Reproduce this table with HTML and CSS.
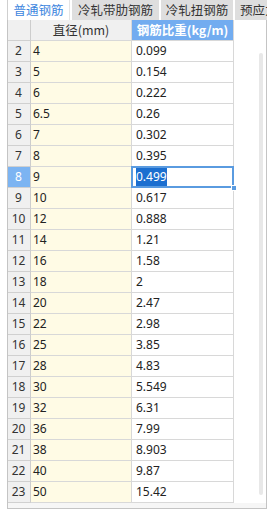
FILE: index.html
```html
<!DOCTYPE html>
<html lang="zh">
<head>
<meta charset="utf-8">
<link rel="stylesheet" href="styles.css">
</head>
<body>
<div class="wrap">
  <div class="tabs">
    <div class="tab active">普通钢筋</div>
    <div class="tab t2">冷轧带肋钢筋</div>
    <div class="tab t3">冷轧扭钢筋</div>
    <div class="tab t4">预应力钢筋</div>
  </div>
  <div class="grid">
    <div class="row head">
      <div class="rh"></div>
      <div class="c1">直径(mm)</div>
      <div class="c2 sel-col">钢筋比重(kg/m)</div>
      <div class="fill"></div>
    </div>
    <div class="row"><div class="rh">2</div><div class="c1">4</div><div class="c2">0.099</div><div class="fill"></div></div>
    <div class="row"><div class="rh">3</div><div class="c1">5</div><div class="c2">0.154</div><div class="fill"></div></div>
    <div class="row"><div class="rh">4</div><div class="c1">6</div><div class="c2">0.222</div><div class="fill"></div></div>
    <div class="row"><div class="rh">5</div><div class="c1">6.5</div><div class="c2">0.26</div><div class="fill"></div></div>
    <div class="row"><div class="rh">6</div><div class="c1">7</div><div class="c2">0.302</div><div class="fill"></div></div>
    <div class="row"><div class="rh">7</div><div class="c1">8</div><div class="c2">0.395</div><div class="fill"></div></div>
    <div class="row"><div class="rh sel-row">8</div><div class="c1">9</div><div class="c2 active-cell"><span class="hl">0.499</span><span class="handle"></span></div><div class="fill"></div></div>
    <div class="row"><div class="rh">9</div><div class="c1">10</div><div class="c2">0.617</div><div class="fill"></div></div>
    <div class="row"><div class="rh">10</div><div class="c1">12</div><div class="c2">0.888</div><div class="fill"></div></div>
    <div class="row"><div class="rh">11</div><div class="c1">14</div><div class="c2">1.21</div><div class="fill"></div></div>
    <div class="row"><div class="rh">12</div><div class="c1">16</div><div class="c2">1.58</div><div class="fill"></div></div>
    <div class="row"><div class="rh">13</div><div class="c1">18</div><div class="c2">2</div><div class="fill"></div></div>
    <div class="row"><div class="rh">14</div><div class="c1">20</div><div class="c2">2.47</div><div class="fill"></div></div>
    <div class="row"><div class="rh">15</div><div class="c1">22</div><div class="c2">2.98</div><div class="fill"></div></div>
    <div class="row"><div class="rh">16</div><div class="c1">25</div><div class="c2">3.85</div><div class="fill"></div></div>
    <div class="row"><div class="rh">17</div><div class="c1">28</div><div class="c2">4.83</div><div class="fill"></div></div>
    <div class="row"><div class="rh">18</div><div class="c1">30</div><div class="c2">5.549</div><div class="fill"></div></div>
    <div class="row"><div class="rh">19</div><div class="c1">32</div><div class="c2">6.31</div><div class="fill"></div></div>
    <div class="row"><div class="rh">20</div><div class="c1">36</div><div class="c2">7.99</div><div class="fill"></div></div>
    <div class="row"><div class="rh">21</div><div class="c1">38</div><div class="c2">8.903</div><div class="fill"></div></div>
    <div class="row"><div class="rh">22</div><div class="c1">40</div><div class="c2">9.87</div><div class="fill"></div></div>
    <div class="row"><div class="rh">23</div><div class="c1">50</div><div class="c2">15.42</div><div class="fill"></div></div>
    <div class="foot"></div>
    <div class="scroll"></div>
  </div>
</div>
</body>
</html>
```

FILE: styles.css
```css
html, body {
  margin: 0;
  padding: 0;
  background: #ffffff;
}
body {
  font-family: "Noto Sans", "Noto Sans CJK SC", sans-serif;
  font-size: 12px;
  color: #222;
  width: 270px;
  height: 514px;
  overflow: hidden;
}
.wrap {
  margin-left: 7px;
  width: 260px;
}
.tabs {
  display: flex;
  gap: 2px;
  height: 20px;
  overflow: hidden;
  white-space: nowrap;
}
.tab {
  flex: none;
  box-sizing: border-box;
  height: 20px;
  line-height: 19px;
  text-align: center;
  font-family: "Noto Sans CJK SC", sans-serif;
  font-size: 12.5px;
  color: #333;
  background: #dedede;
}
.tab.active {
  width: 63px;
  background: #ffffff;
  color: #3d86de;
  border-left: 1px solid #cfcfcf;
  border-right: 1px solid #e4e4e4;
}
.tab.t2 { width: 87px; }
.tab.t3 { width: 72px; }
.tab.t4 { width: 80px; text-align: left; padding-left: 5px; }

.grid {
  position: relative;
  border-left: 1px solid #c4c4c4;
  border-right: 1px solid #c4c4c4;
  border-bottom: 1px solid #c4c4c4;
}
.row {
  display: grid;
  grid-template-columns: 23px 101px 102px 1fr;
  height: 21px;
}
.row > div {
  box-sizing: border-box;
  height: 21px;
  line-height: 20px;
  border-bottom: 1px solid #d8d8d8;
  border-right: 1px solid #d8d8d8;
  white-space: nowrap;
}
.row > .fill {
  border: none;
}
.rh {
  background: #f0f0f0;
  text-align: center;
  color: #333;
  border-right-color: #cdcdcd !important;
  border-bottom-color: #d0d0d0 !important;
  padding-right: 1px;
}
.c1 {
  background: #fffbe5;
  padding-left: 2px;
}
.c2 {
  background: #ffffff;
  padding-left: 4px;
}
.head > div {
  background: #f0f0f0;
  font-family: "Noto Sans CJK SC", sans-serif;
  font-size: 12.5px;
  line-height: 19px;
  color: #333;
  text-align: center;
  padding: 0;
}
.head > .fill {
  background: #ffffff;
}
.head > .sel-col {
  background: #72acf0;
  color: #ffffff;
  font-weight: bold;
}
.rh.sel-row {
  background: #7cb4f2;
  color: #ffffff;
}
.active-cell {
  position: relative;
}
.active-cell::after {
  content: "";
  position: absolute;
  left: -1px;
  top: -1px;
  right: -1px;
  bottom: -1px;
  border: 2px solid #5a9be0;
}
.hl {
  background: #1c6fd0;
  color: #ffffff;
  padding: 1px 0;
}
.handle {
  position: absolute;
  right: -4px;
  bottom: -4px;
  width: 4px;
  height: 4px;
  background: #5a9be0;
  border: 1px solid #ffffff;
  z-index: 2;
}
.foot {
  height: 5px;
  background: #f6f6f6;
}
.scroll {
  position: absolute;
  right: 3px;
  top: 33px;
  width: 4px;
  height: 442px;
  border-radius: 2px;
  background: #e8e8e8;
}
```
